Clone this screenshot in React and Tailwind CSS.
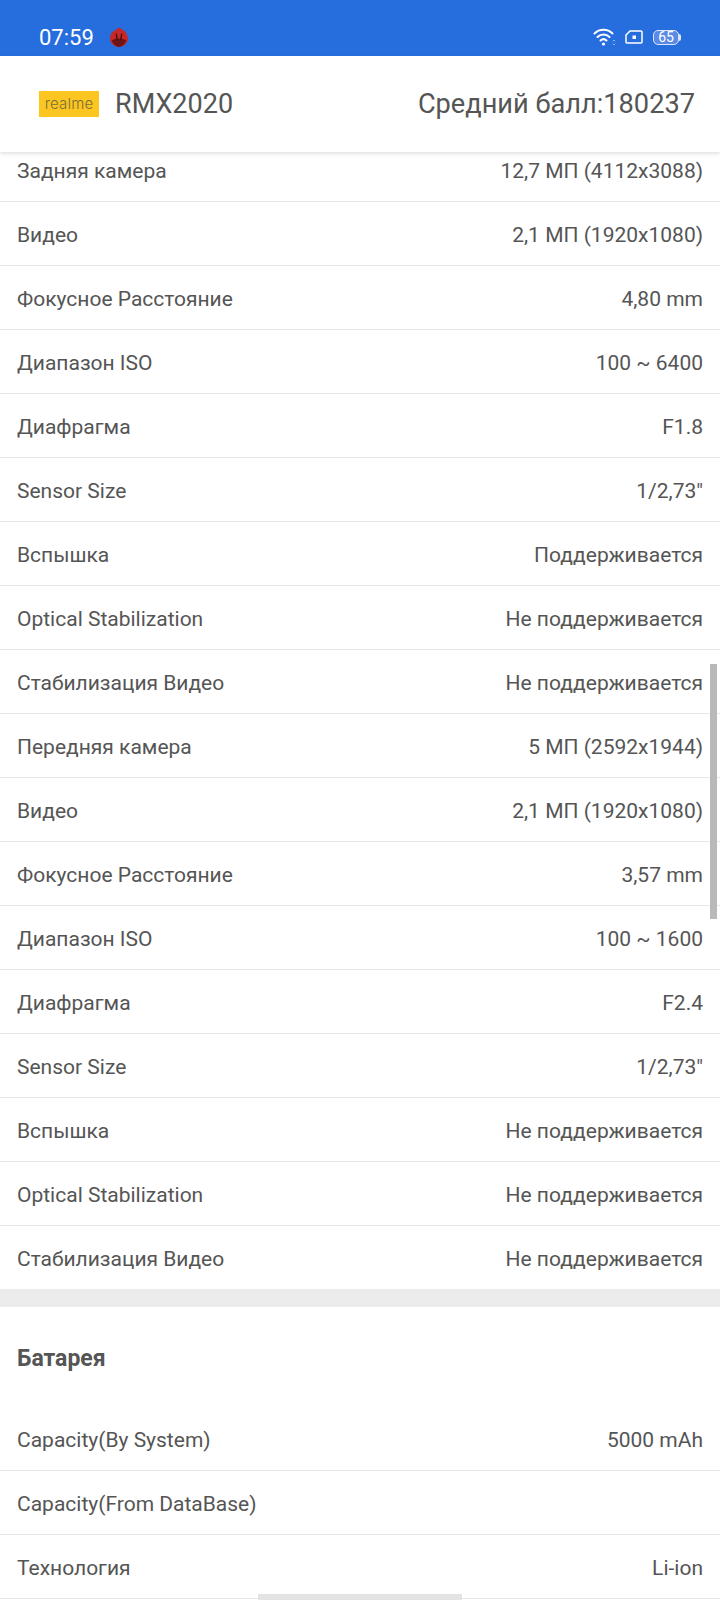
import React from "react";

const cameraRows = [
    ["Задняя камера", "12,7 МП (4112x3088)"],
    ["Видео", "2,1 МП (1920x1080)"],
    ["Фокусное Расстояние", "4,80 mm"],
    ["Диапазон ISO", "100 ~ 6400"],
    ["Диафрагма", "F1.8"],
    ["Sensor Size", '1/2,73"'],
    ["Вспышка", "Поддерживается"],
    ["Optical Stabilization", "Не поддерживается"],
    ["Стабилизация Видео", "Не поддерживается"],
    ["Передняя камера", "5 МП (2592x1944)"],
    ["Видео", "2,1 МП (1920x1080)"],
    ["Фокусное Расстояние", "3,57 mm"],
    ["Диапазон ISO", "100 ~ 1600"],
    ["Диафрагма", "F2.4"],
    ["Sensor Size", '1/2,73"'],
    ["Вспышка", "Не поддерживается"],
    ["Optical Stabilization", "Не поддерживается"],
];

const batteryRows = [
    ["Capacity(By System)", "5000 mAh"],
    ["Capacity(From DataBase)", ""],
    ["Технология", "Li-ion"],
];

function Row({ label, value }) {
    return (
        <div className="h-[64px] flex items-center justify-between px-[17px] pt-[4px] border-b border-[#e8e8e8]">
            <span>{label}</span>
            <span>{value}</span>
        </div>
    );
}

function AntutuIcon() {
    return (
        <svg width="18" height="20" viewBox="0 0 20 22">
            <path d="M10 0 C11 2 13 3 14 2 C14 4 16 4 17 5 C19 8 20 11 20 13 C20 18 15 22 10 22 C5 22 0 18 0 13 C0 10 1 7 3 5 C5 5 6 4 6 2 C7 3 9 2 10 0 Z" fill="#c62828" />
            <path d="M2 15 C5 12 15 12 18 15 C17 19 13 22 10 22 C7 22 3 19 2 15 Z" fill="#6d1414" />
            <path d="M7 8 L8 14 M13 8 L12 14" stroke="#4a0d0d" strokeWidth="1.6" strokeLinecap="round" fill="none" />
        </svg>
    );
}

function StatusIcons() {
    return (
        <div className="flex items-center">
            <svg width="23" height="19" viewBox="0 0 23 19" fill="none" stroke="#fff" strokeWidth="2" strokeLinecap="round">
                <path d="M1.5 5.5 C6.5 0.5 14.5 0.5 19.5 5.5" />
                <path d="M4.5 9 C8 5.5 13 5.5 16.5 9" />
                <path d="M7.5 12.5 C9.3 10.8 11.7 10.8 13.5 12.5" />
                <circle cx="10.5" cy="16" r="1.6" fill="#fff" stroke="none" />
                <path d="M20 13 L21 12 L22 13 M20 16 L21 17 L22 16" stroke="#8fb2ee" strokeWidth="1" />
            </svg>
            <svg className="ml-[9px]" width="18" height="14" viewBox="0 0 18 14" fill="none">
                <path d="M5 1 H16 a1 1 0 0 1 1 1 V12 a1 1 0 0 1 -1 1 H2 a1 1 0 0 1 -1 -1 V5 Z" stroke="#fff" strokeWidth="1.5" strokeLinejoin="round" />
                <rect x="7.5" y="5.5" width="3.5" height="3.5" fill="#fff" />
            </svg>
            <div className="flex items-center ml-[10px]">
                <div className="w-[26px] h-[15px] rounded-[5px] border-[1.5px] border-[#dbe6fa] bg-[#5b8ae6] flex items-center justify-center text-[14px] leading-none text-white">
                    65
                </div>
                <div className="w-[2px] h-[7px] bg-[#dbe6fa] rounded-r-sm" />
            </div>
        </div>
    );
}

export default function App() {
    return (
        <div className="relative w-[720px] h-[1600px] overflow-hidden bg-white text-[#555555] text-[21px] font-['Roboto',sans-serif] flex flex-col">
            <div className="h-[56px] bg-[#266ddd] flex items-center justify-between pt-[18px] pl-[39px] pr-[39px] text-white shrink-0">
                <div className="flex items-center gap-[16px]">
                    <span className="text-[22px]">07:59</span>
                    <AntutuIcon />
                </div>
                <StatusIcons />
            </div>

            <div className="relative z-10 h-[96px] bg-white shadow-[0_2px_4px_rgba(0,0,0,0.12)] flex items-center justify-between pl-[39px] pr-[25px] shrink-0">
                <div className="flex items-center gap-[16px]">
                    <div className="w-[60px] h-[26px] bg-[#fdc51f] flex items-center justify-center text-[15px] font-light tracking-[0.2px] text-[#75703c] font-['Inter',sans-serif]">
                        realme
                    </div>
                    <span className="text-[27px]">RMX2020</span>
                </div>
                <span className="text-[27.2px]">Средний балл:180237</span>
            </div>

            <div className="-mt-[14px]">
                {cameraRows.map(([label, value], i) => (
                    <Row key={i} label={label} value={value} />
                ))}
                <div className="h-[63px] flex items-center justify-between px-[17px] pt-[4px]">
                    <span>Стабилизация Видео</span>
                    <span>Не поддерживается</span>
                </div>
            </div>

            <div className="h-[18px] bg-[#ececec]" />

            <div className="h-[100px] flex items-center pl-[17px] pt-[4px] text-[23px] font-bold">Батарея</div>

            <div>
                {batteryRows.map(([label, value], i) => (
                    <Row key={i} label={label} value={value} />
                ))}
            </div>

            {/* scrollbar + gesture bar */}
            <div className="absolute left-[710px] top-[664px] w-[7px] h-[255px] bg-[#b9b9b9]" />
            <div className="absolute left-[258px] top-[1594px] w-[204px] h-[6px] bg-[#e3e3e3]" />
        </div>
    );
}
